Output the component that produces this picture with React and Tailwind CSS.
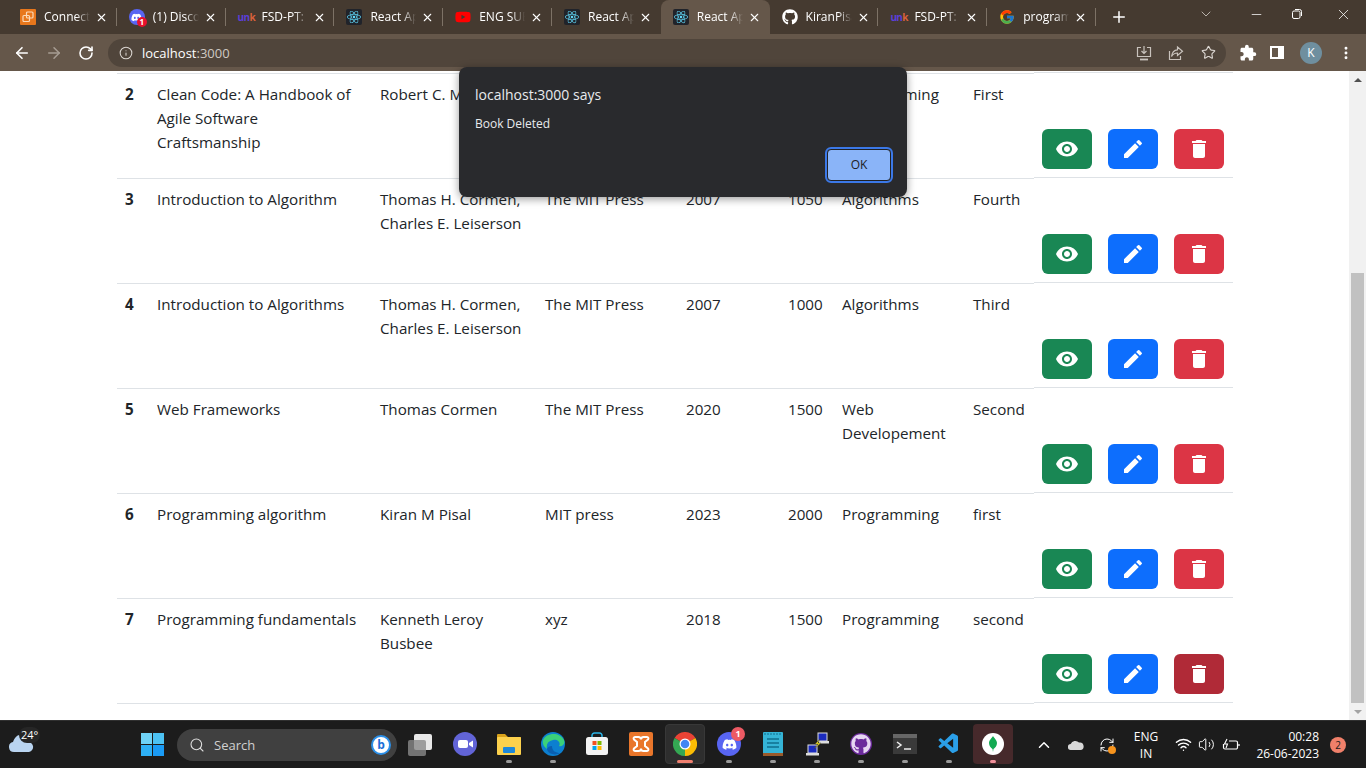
import { MdVisibility, MdEdit, MdDelete, MdExtension } from 'react-icons/md';
import { FaReact, FaGithub, FaYoutube, FaDiscord } from 'react-icons/fa';
import { FcGoogle } from 'react-icons/fc';
import { VscVscode } from 'react-icons/vsc';
import {
  ArrowLeft, ArrowRight, RotateCw, RefreshCw, Info, Star, X, Plus, ChevronDown,
  Minus, MoreVertical, Search, ChevronUp, Wifi, Volume2,
} from 'lucide-react';

const COLS = 'grid grid-cols-[32px_223px_165px_141px_102px_54px_131px_69px_199px]';

const BOOKS = [
  { id: 2, title: 'Clean Code: A Handbook of Agile Software Craftsmanship', author: 'Robert C. Martin', publisher: 'Prentice Hall', year: 2008, pages: 464, category: 'Programming', edition: 'First' },
  { id: 3, title: 'Introduction to Algorithm', author: 'Thomas H. Cormen, Charles E. Leiserson', publisher: 'The MIT Press', year: 2007, pages: 1050, category: 'Algorithms', edition: 'Fourth' },
  { id: 4, title: 'Introduction to Algorithms', author: 'Thomas H. Cormen, Charles E. Leiserson', publisher: 'The MIT Press', year: 2007, pages: 1000, category: 'Algorithms', edition: 'Third' },
  { id: 5, title: 'Web Frameworks', author: 'Thomas Cormen', publisher: 'The MIT Press', year: 2020, pages: 1500, category: 'Web Developement', edition: 'Second' },
  { id: 6, title: 'Programming algorithm', author: 'Kiran M Pisal', publisher: 'MIT press', year: 2023, pages: 2000, category: 'Programming', edition: 'first' },
  { id: 7, title: 'Programming fundamentals', author: 'Kenneth Leroy Busbee', publisher: 'xyz', year: 2018, pages: 1500, category: 'Programming', edition: 'second' },
];

function ReactIcon() {
  return (
    <span className="w-4 h-4 bg-[#20232a] rounded-[2px] flex items-center justify-center shrink-0">
      <FaReact size={14} className="text-[#61dafb]" />
    </span>
  );
}

function ConnectIcon() {
  return (
    <span className="w-4 h-4 bg-[#e8771c] rounded-[1px] flex items-center justify-center shrink-0">
      <svg width="12" height="12" viewBox="0 0 12 12" fill="none" stroke="#fbd9b8" strokeWidth="1.2">
        <rect x="4.5" y="1" width="6.5" height="6" rx="1" />
        <rect x="1" y="4.5" width="6.5" height="6" rx="1" />
      </svg>
    </span>
  );
}

function DiscordTabIcon() {
  return (
    <span className="relative w-4 h-4 rounded-full bg-[#5865f2] flex items-center justify-center shrink-0">
      <FaDiscord size={11} className="text-white" />
      <span className="absolute -right-[2px] -bottom-[2px] w-[10px] h-[10px] rounded-full bg-[#e8112d] text-white text-[8px] leading-[10px] text-center font-bold">1</span>
    </span>
  );
}

function UnicIcon() {
  return (
    <span className="w-4 shrink-0 text-[10px] font-bold tracking-[-0.6px] leading-4 whitespace-nowrap">
      <span className="text-[#5b3fd8]">un</span><span className="text-[#d9603a]">k</span>
    </span>
  );
}

const TABS = [
  { icon: <ConnectIcon />, label: 'Connect' },
  { icon: <DiscordTabIcon />, label: '(1) Discord' },
  { icon: <UnicIcon />, label: 'FSD-PT: React' },
  { icon: <ReactIcon />, label: 'React App' },
  { icon: <FaYoutube size={16} className="text-[#ff0000] shrink-0" />, label: 'ENG SUB' },
  { icon: <ReactIcon />, label: 'React App', noSep: true },
  { icon: <ReactIcon />, label: 'React App', active: true, noSep: true },
  { icon: <FaGithub size={16} className="text-white shrink-0" />, label: 'KiranPisal' },
  { icon: <UnicIcon />, label: 'FSD-PT: React' },
  { icon: <FcGoogle size={16} className="shrink-0" />, label: 'programming' },
];

function Tab({ tab }) {
  return (
    <div className={`relative w-[108.8px] h-[34px] flex items-center pl-3 shrink-0 ${tab.active ? 'bg-[#65574a] rounded-t-lg' : ''}`}>
      {tab.icon}
      <span className="ml-2 w-[46px] overflow-hidden whitespace-nowrap text-xs text-white [mask-image:linear-gradient(to_right,black_70%,transparent)]">
        {tab.label}
      </span>
      <X size={13} strokeWidth={2} className="absolute left-[87px] top-[11px] text-white" />
      {!tab.noSep && <span className="absolute right-0 top-[8px] h-[18px] w-px bg-[#7d7266]" />}
    </div>
  );
}

function ChromeBar() {
  return (
    <div className="shrink-0">
      <div className="h-[34px] bg-[#453a30] flex items-center pl-2 text-white">
        {TABS.map((t, i) => <Tab key={i} tab={t} />)}
        <Plus size={18} strokeWidth={2} className="ml-[14px]" />
        <ChevronDown size={16} strokeWidth={1.2} className="ml-[70px] -mt-[6px] text-[#d6d0ca]" />
        <Minus size={15} strokeWidth={1.2} className="ml-[35px] -mt-[6px]" />
        <svg width="12" height="12" viewBox="0 0 12 12" fill="none" stroke="white" className="ml-[27px] -mt-[6px]">
          <rect x="1.5" y="3" width="7.5" height="7.5" rx="1.5" />
          <path d="M4 1.5h4.5A2 2 0 0 1 10.500 3.500V8" />
        </svg>
        <X size={17} strokeWidth={1.1} className="ml-[32px] -mt-[6px]" />
      </div>
      <div className="h-[37px] bg-[#65574a] flex items-center text-white">
        <ArrowLeft size={18} strokeWidth={2.2} className="ml-[13px]" />
        <ArrowRight size={18} strokeWidth={2} className="ml-[14px] text-[#a79d93]" />
        <RotateCw size={16} strokeWidth={2.4} className="ml-[15px]" />
        <div className="ml-[14px] w-[1118px] h-[28px] rounded-full bg-[#50453b] flex items-center pl-[11px] pr-[10px]">
          <Info size={14} strokeWidth={1.8} className="text-[#dcd7d2]" />
          <span className="ml-[9px] text-[13px] text-white">localhost<span className="text-[#cfc9c3]">:3000</span></span>
          <svg width="16" height="16" viewBox="0 0 16 16" fill="none" stroke="#c9c3bd" strokeWidth="1.2" className="ml-auto">
            <path d="M5 2.500H1.500v9h13v-9H11" />
            <path d="M8 1v7.500M5.500 6 8 8.500 10.500 6" />
            <path d="M4 14.500h8" strokeWidth="1.800" />
          </svg>
          <svg width="16" height="16" viewBox="0 0 16 16" fill="none" stroke="#c9c3bd" strokeWidth="1.2" className="ml-4">
            <path d="M1.500 6v8.500h11V11" />
            <path d="M9.500 2l5 4.200-5 4.300V8C7 8 5 9 3.500 11.500 4 7.500 6.500 5 9.500 4.800z" />
          </svg>
          <Star size={15} strokeWidth={1.8} className="ml-[17px] text-[#dcd7d2]" />
        </div>
        <MdExtension size={18} className="ml-[13px]" />
        <span className="ml-[13px] w-[14px] h-[13px] border-2 border-white border-r-[6px]" />
        <span className="ml-[16px] w-[22px] h-[22px] rounded-full bg-[#6f8f9f] text-xs text-white flex items-center justify-center">K</span>
        <MoreVertical size={16} strokeWidth={2.4} className="ml-[16px]" />
      </div>
    </div>
  );
}

function BookRow({ book, hovered }) {
  const cell = 'p-2 border-b border-[#dee2e6]';
  return (
    <div className={`${COLS} h-[105px] text-[#212529]`}>
      <div className={`${cell} font-bold`}>{book.id}</div>
      <div className={cell}>{book.title}</div>
      <div className={cell}>{book.author}</div>
      <div className={cell}>{book.publisher}</div>
      <div className={cell}>{book.year}</div>
      <div className={cell}>{book.pages}</div>
      <div className={cell}>{book.category}</div>
      <div className={cell}>{book.edition}</div>
      <div className="h-[104px] p-2 border-b border-[#dee2e6] flex items-end gap-4">
        <button className="w-[50px] h-10 rounded-md bg-[#198754] text-white flex items-center justify-center"><MdVisibility size={24} /></button>
        <button className="w-[50px] h-10 rounded-md bg-[#0d6efd] text-white flex items-center justify-center"><MdEdit size={24} /></button>
        <button className={`w-[50px] h-10 rounded-md text-white flex items-center justify-center ${hovered ? 'bg-[#b02a37]' : 'bg-[#dc3545]'}`}><MdDelete size={24} /></button>
      </div>
    </div>
  );
}

function Scrollbar() {
  return (
    <div className="w-[17px] shrink-0 bg-[#f1f1f1] flex flex-col items-center">
      <div className="h-[17px] shrink-0 flex items-center justify-center">
        <span className="w-0 h-0 border-x-4 border-x-transparent border-b-4 border-b-[#505050]" />
      </div>
      <div className="h-[185px] shrink-0" />
      <div className="w-[13px] h-[430px] bg-[#c1c1c1] shrink-0" />
      <div className="h-[17px] shrink-0 flex items-center justify-center">
        <span className="w-0 h-0 border-x-4 border-x-transparent border-t-4 border-t-[#a3a3a3]" />
      </div>
    </div>
  );
}

function AlertBox() {
  return (
    <div className="absolute left-[459px] top-[67px] w-[448px] h-[130px] bg-[#292a2d] rounded-lg shadow-[0_2px_8px_rgba(0,0,0,0.4)] pl-4 pr-4 pt-[18px] text-[#e8eaed] z-10">
      <p className="text-sm leading-5">localhost:3000 says</p>
      <p className="text-xs leading-4 mt-[11px]">Book Deleted</p>
      <div className="flex justify-end mt-[17px]">
        <button className="w-[64px] h-[32px] bg-[#8ab4f8] border border-[#202124] outline-2 outline-[#3b78e7] rounded text-xs text-[#202124]">OK</button>
      </div>
    </div>
  );
}

function WinLogo() {
  return (
    <span className="grid grid-cols-2 gap-[1px] w-[23px] h-[23px]">
      <span className="bg-[#6fd3f7]" />
      <span className="bg-[#4cc2f3]" />
      <span className="bg-[#2eb0f5]" />
      <span className="bg-[#1a9bf5]" />
    </span>
  );
}

function ChromeIcon() {
  return (
    <svg width="24" height="24" viewBox="0 0 24 24">
      <path d="M12 12L1.600 6A12 12 0 0 1 22.400 6z" fill="#ea4335" />
      <path d="M12 12L22.400 6A12 12 0 0 1 12 24z" fill="#fbbc04" />
      <path d="M12 12L12 24A12 12 0 0 1 1.600 6z" fill="#34a853" />
      <circle cx="12" cy="12" r="5.500" fill="#fff" />
      <circle cx="12" cy="12" r="4.300" fill="#4285f4" />
    </svg>
  );
}

function EdgeIcon() {
  return (
    <svg width="24" height="24" viewBox="0 0 24 24">
      <circle cx="12" cy="12" r="12" fill="#0c7fd0" />
      <path d="M2 8C5 1 18-1 23 8c1.500 4-2 7-5 6 2-3-1-7-6-6C7 9 5 12 6 17 3 15 1 12 2 8z" fill="#3bd07a" />
      <path d="M6 17c1 5 8 7 13 4-4 0-8-2-8-7-3 0-4 1-5 3z" fill="#0a5fb0" />
    </svg>
  );
}

function StoreIcon() {
  return (
    <svg width="24" height="24" viewBox="0 0 24 24">
      <path d="M7 6V3.500A2.500 2.500 0 0 1 9.500 1h5A2.500 2.500 0 0 1 17 3.500V6" fill="none" stroke="#2bb5e8" strokeWidth="1.500" />
      <rect x="1" y="5" width="22" height="18" rx="2.500" fill="#f3f3f3" />
      <rect x="7.500" y="9" width="4" height="4" fill="#f25022" />
      <rect x="12.500" y="9" width="4" height="4" fill="#7fba00" />
      <rect x="7.500" y="14" width="4" height="4" fill="#00a4ef" />
      <rect x="12.500" y="14" width="4" height="4" fill="#ffb900" />
    </svg>
  );
}

function XamppIcon() {
  return (
    <svg width="24" height="24" viewBox="0 0 24 24">
      <rect width="24" height="24" rx="2" fill="#e9762b" />
      <path d="M6 5h3.500a2.500 2.500 0 0 1 2.500 2.500A2.500 2.500 0 0 1 14.500 5H18a1.500 1.500 0 0 1 1 2.500L16 10v4l3 2.500A1.500 1.500 0 0 1 18 19h-3.500A2.500 2.500 0 0 1 12 16.500 2.500 2.500 0 0 1 9.500 19H6a1.500 1.500 0 0 1-1-2.500L8 14v-4L5 7.500A1.500 1.500 0 0 1 6 5z" fill="none" stroke="#fff" strokeWidth="2" />
    </svg>
  );
}

function ExplorerIcon() {
  return (
    <svg width="24" height="24" viewBox="0 0 24 24">
      <path d="M0 3a1 1 0 0 1 1-1h7l3 3h12a1 1 0 0 1 1 1v3H0z" fill="#d9a21b" />
      <rect y="5" width="24" height="18" rx="1" fill="#fcd14d" />
      <rect x="6" y="15" width="12" height="6" rx="1" fill="#1e88d9" />
    </svg>
  );
}

function NotepadIcon() {
  return (
    <svg width="20" height="24" viewBox="0 0 20 24">
      <rect width="20" height="24" rx="1" fill="#35b4d6" />
      <rect y="21" width="20" height="3" fill="#9a5a2b" />
      <path d="M4 7h12M4 11h12M4 15h12" stroke="#0f6f8f" strokeWidth="1.500" />
      <path d="M2 1v2M5 1v2M8 1v2M11 1v2M14 1v2M17 1v2" stroke="#0f6f8f" strokeWidth="1" />
    </svg>
  );
}

function NetworkIcon() {
  return (
    <svg width="24" height="24" viewBox="0 0 24 24">
      <rect x="13" y="1" width="9" height="8" fill="#1a2bbf" stroke="#ddd" />
      <rect x="3" y="13" width="9" height="8" fill="#1a2bbf" stroke="#ddd" />
      <rect x="1" y="21" width="13" height="2.500" fill="#ddd" />
      <rect x="14" y="9" width="10" height="2.500" fill="#ddd" />
      <path d="M15 7l-5 5 3 0-4 5 7-6-3 0z" fill="#f4e11a" stroke="#333" strokeWidth=".4" />
    </svg>
  );
}

function TerminalIcon() {
  return (
    <svg width="24" height="20" viewBox="0 0 24 20">
      <rect width="24" height="20" fill="#3a3a3a" />
      <rect width="24" height="4" fill="#666" />
      <path d="M4 8l4 3-4 3" fill="none" stroke="#eee" strokeWidth="1.500" />
      <path d="M11 15h7" stroke="#eee" strokeWidth="1.500" />
    </svg>
  );
}

function MongoIcon() {
  return (
    <span className="w-[22px] h-[22px] rounded-full bg-white flex items-center justify-center">
      <svg width="8" height="16" viewBox="0 0 8 16"><path d="M4 0c1 2 4 4 4 7s-2 5-3.500 6L4 16l-.5-3C2 12 0 10 0 7s3-5 4-7z" fill="#13aa52" /></svg>
    </span>
  );
}

function MeetIcon() {
  return (
    <svg width="24" height="24" viewBox="0 0 24 24">
      <circle cx="12" cy="12" r="12" fill="#6264d7" />
      <rect x="5" y="8" width="10" height="8" rx="2" fill="#fff" />
      <path d="M16 11l4-2.500v7L16 13z" fill="#fff" />
    </svg>
  );
}

function OneDriveIcon() {
  return (
    <svg width="16" height="11" viewBox="0 0 16 11" className="ml-[15px]">
      <path d="M3 11a3 3 0 0 1-.3-6A5 5 0 0 1 11 3.500 3.800 3.800 0 0 1 12.500 11z" fill="#d8d8d8" />
    </svg>
  );
}

function BatteryIcon() {
  return (
    <svg width="18" height="14" viewBox="0 0 18 14" fill="none" stroke="white" strokeWidth="1.200" className="ml-[7px]">
      <path d="M7 3h7a1.500 1.500 0 0 1 1.500 1.500v5A1.500 1.500 0 0 1 14 11H3a1.500 1.500 0 0 1-1.500-1.500V6" />
      <path d="M17 6v2" />
      <path d="M5 1L2.500 6h3L4 10" strokeWidth="1.100" />
    </svg>
  );
}

function WeatherCloud() {
  return (
    <svg width="25" height="19" viewBox="0 0 25 19" className="absolute left-[9px] top-[12px]">
      <path d="M5 19a5 5 0 0 1-1-9.900C6 3 11 0 15 3c3 2 3 5 3 6a5 5 0 0 1 2 10z" fill="#b9d4f0" />
    </svg>
  );
}

const APPS = [
  { icon: <MeetIcon /> },
  { icon: <ExplorerIcon />, dot: true },
  { icon: <EdgeIcon />, dot: true },
  { icon: <StoreIcon /> },
  { icon: <XamppIcon /> },
  { icon: <ChromeIcon />, active: true },
  { icon: <span className="relative w-6 h-6 rounded-full bg-[#5865f2] flex items-center justify-center"><FaDiscord size={15} className="text-white" /><span className="absolute -right-[4px] -top-[5px] w-[14px] h-[14px] rounded-full bg-[#ed5a64] text-white text-[9px] leading-[14px] text-center font-bold">1</span></span>, dot: true },
  { icon: <NotepadIcon />, dot: true },
  { icon: <NetworkIcon />, dot: true },
  { icon: <span className="w-[22px] h-[22px] rounded-full bg-[#6b2a9c] flex items-center justify-center"><FaGithub size={20} className="text-[#e6d6f2]" /></span>, dot: true },
  { icon: <TerminalIcon />, dot: true },
  { icon: <VscVscode size={24} className="text-[#2b9fe8]" />, dot: true },
  { icon: <MongoIcon />, mongo: true },
];

function AppSlot({ app }) {
  return (
    <div className="relative w-[44px] h-full shrink-0 flex items-center justify-center">
      {app.active && <span className="absolute left-[2px] top-[3px] w-10 h-10 rounded bg-[#2e2e2e] border border-[#383838]" />}
      {app.mongo && <span className="absolute left-[2px] top-[3px] w-[40px] h-10 rounded bg-[#46292b]" />}
      <span className="relative flex items-center justify-center -mt-[1px]">{app.icon}</span>
      {app.dot && <span className="absolute left-[19px] bottom-[5px] w-[6px] h-[3px] rounded-full bg-[#9a9a9a]" />}
      {app.active && <span className="absolute left-[14px] bottom-[5px] w-4 h-[3px] rounded-full bg-[#f08070]" />}
      {app.mongo && <span className="absolute left-[19px] bottom-[5px] w-[6px] h-[3px] rounded-full bg-[#f0909a]" />}
    </div>
  );
}

function Taskbar() {
  return (
    <div className="h-[48px] shrink-0 bg-[#1c1c1c] border-t border-[#303030] flex items-center text-white">
      <div className="relative w-[130px] h-full shrink-0">
        <WeatherCloud />
        <span className="absolute left-[19px] top-[6px] px-[2px] rounded-full bg-[#262626] text-[11px] leading-4 text-white">24°</span>
      </div>
      <div className="w-[44px] flex justify-center shrink-0"><WinLogo /></div>
      <div className="ml-[3px] w-[220px] h-8 rounded-full bg-[#404040] flex items-center pl-3 pr-[6px] shrink-0">
        <Search size={16} strokeWidth={1.6} className="text-[#e0e0e0]" />
        <span className="ml-[9px] text-[13px] text-[#d0d0d0]">Search</span>
        <span className="ml-auto w-5 h-5 rounded-full bg-white border-2 border-[#2b8fe8] flex items-center justify-center text-xs font-bold text-[#1a6fd8]">b</span>
      </div>
      <div className="w-[46px] flex justify-center shrink-0">
        <span className="relative w-6 h-[22px]">
          <span className="absolute right-0 top-0 w-[18px] h-4 rounded-[2px] bg-[#e8e8e8]" />
          <span className="absolute left-0 bottom-0 w-[18px] h-4 rounded-[2px] bg-[#8a8a8a]/80" />
        </span>
      </div>
      {APPS.map((a, i) => <AppSlot key={i} app={a} />)}
      <ChevronUp size={18} strokeWidth={2} className="ml-[20px]" />
      <OneDriveIcon />
      <span className="relative ml-[15px] w-4 h-4">
        <RefreshCw size={16} strokeWidth={1.5} />
        <span className="absolute -right-[1px] -bottom-[1px] w-2 h-2 rounded-full bg-[#f7941d]" />
      </span>
      <div className="ml-[16px] w-[30px] text-center text-xs leading-[17px]">ENG<br />IN</div>
      <Wifi size={17} strokeWidth={2} className="ml-[14px]" />
      <Volume2 size={17} strokeWidth={1.4} className="ml-[6px]" />
      <BatteryIcon />
      <div className="ml-[15px] w-[64px] text-right text-xs leading-[17px]">00:28<br />26-06-2023</div>
      <span className="ml-[11px] w-4 h-4 rounded-full bg-[#f0806a] text-[#1c1c1c] text-[10px] leading-4 text-center">2</span>
    </div>
  );
}

export default function App() {
  return (
    <div className="relative w-[1366px] h-[768px] overflow-hidden flex flex-col bg-white font-['Open_Sans',sans-serif] text-[15.2px] leading-6">
      <ChromeBar />
      <div className="flex-1 min-h-0 flex">
        <div className="flex-1 pl-[117px]">
          <div className={`${COLS} h-[3px]`}>
            <div className="col-span-8 border-b border-[#dee2e6]" />
            <div className="h-[2px] border-b border-[#dee2e6]" />
          </div>
          {BOOKS.map((b) => <BookRow key={b.id} book={b} hovered={b.id === 7} />)}
        </div>
        <Scrollbar />
      </div>
      <Taskbar />
      <AlertBox />
    </div>
  );
}
